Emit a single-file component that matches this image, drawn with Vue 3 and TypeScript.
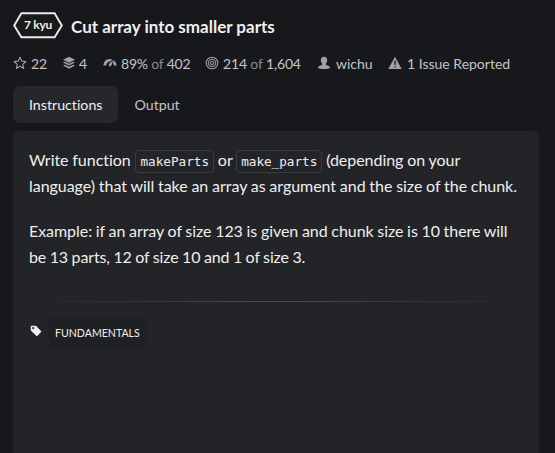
<script setup lang="ts">
import { ref } from 'vue'

type Tab = 'Instructions' | 'Output'
const tabs: Tab[] = ['Instructions', 'Output']
const active = ref<Tab>('Instructions')
</script>

<template>
  <main class="page">
    <header class="title-row">
      <div class="rank">
        <svg class="hex" width="50" height="27" viewBox="0 0 50 27">
          <path d="M8.4 1.2H41.6L48.8 13.5L41.6 25.2H8.4L1.2 13.5Z" fill="#1a1a1a" stroke="#ececec" stroke-width="1.9" />
        </svg>
        <span class="rank-text">7 kyu</span>
      </div>
      <h1>Cut array into smaller parts</h1>
    </header>

    <div class="stats">
      <div class="stat stars">
        <svg width="14" height="14" viewBox="0 0 14 14"><path d="M7 1.2L8.7 5.1L12.9 5.5L9.7 8.3L10.7 12.5L7 10.3L3.3 12.5L4.3 8.3L1.1 5.5L5.3 5.1Z" fill="none" stroke="#a0a1a2" stroke-width="1.1" stroke-linejoin="round" /></svg>
        <span>22</span>
      </div>
      <div class="stat collections">
        <svg width="14" height="14" viewBox="0 0 14 14" fill="#a0a1a2"><path d="M7 .7L13 3.7L7 6.7L1 3.7Z" /><path d="M1 6.6L2.8 5.7L7 7.8L11.2 5.7L13 6.6L7 9.6Z" /><path d="M1 9.6L2.8 8.7L7 10.8L11.2 8.7L13 9.6L7 12.7Z" /></svg>
        <span>4</span>
      </div>
      <div class="stat satisfaction">
        <svg width="14" height="14" viewBox="0 0 14 14"><path d="M.4 9.6C.8 5.7 3.2 3.3 6.4 3.1C7.5 3 8.4 3.2 9.2 3.6L7.4 5.6C5 5.5 3.5 7.2 3.2 9.6ZM11.2 4.6C12.6 5.8 13.4 7.4 13.6 9.6H10.9C10.8 8.6 10.4 7.7 9.9 7.1Z" fill="#a0a1a2" /><path d="M10.8 3.4L8.3 9.4C7.8 10.6 6.1 10.5 5.8 9.4C5.6 8.7 5.9 8.2 6.3 7.8Z" fill="#a0a1a2" /></svg>
        <span>89% <i>of</i> 402</span>
      </div>
      <div class="stat completed">
        <svg width="14" height="14" viewBox="0 0 14 14" fill="none" stroke="#a0a1a2"><circle cx="7" cy="7" r="5.8" stroke-width="1.1" /><circle cx="7" cy="7" r="3.8" stroke-width="1" /><circle cx="7" cy="7" r="1.8" stroke-width="1" /><circle cx="7" cy="7" r=".5" fill="#a0a1a2" stroke="none" /></svg>
        <span>214 <i>of</i> 1,604</span>
      </div>
      <div class="stat author">
        <svg width="14" height="14" viewBox="0 0 14 14"><path d="M7 .8C9 .8 10.2 2 10.2 4.2C10.2 5.7 9.5 7 8.7 7.8C8.7 8.7 9 9 9.8 9.2C12 9.7 13 10.4 13 12.1C11 13.4 3 13.4 1 12.1C1 10.4 2 9.7 4.2 9.2C5 9 5.3 8.7 5.3 7.8C4.5 7 3.8 5.7 3.8 4.2C3.8 2 5 .8 7 .8Z" fill="#a0a1a2" /></svg>
        <span>wichu</span>
      </div>
      <div class="stat issues">
        <svg width="14" height="14" viewBox="0 0 14 14"><path d="M7 .8L13.7 13H.3Z" fill="#a0a1a2" /><path d="M6.2 4.8H7.8L7.5 9.1H6.5ZM6.3 10.2H7.7V11.6H6.3Z" fill="#17181b" /></svg>
        <span>1 Issue Reported</span>
      </div>
    </div>

    <nav class="tabs">
      <button v-for="tab in tabs" :key="tab" :class="{ active: active === tab }" @click="active = tab">{{ tab }}</button>
    </nav>

    <section class="panel">
      <p>Write function <code class="first">makeParts</code> or <code>make_parts</code> (depending on your<br>language) that will take an array as argument and the size of the chunk.</p>
      <p class="example">Example: if an array of size 123 is given and chunk size is 10 there will<br><span class="result">be 13 parts, 12 of size 10 and 1 of size 3.</span></p>
      <div class="divider"></div>
      <div class="tags">
        <svg width="12" height="12" viewBox="0 0 12 12"><path fill-rule="evenodd" d="M.7 1.7Q.7.7 1.7.7H5.2L6.2 1.1L11 5.9Q11.6 6.5 11 7.1L7.5 10.7Q6.8 11.3 6.2 10.7L1.1 5.7L.7 4.8ZM3.2 2A1.1 1.1 0 1 0 3.2 4.2A1.1 1.1 0 1 0 3.2 2Z" fill="#efefef" /></svg>
        <span class="tag">FUNDAMENTALS</span>
      </div>
    </section>
  </main>
</template>

<style>
body { background: #17181b; overflow: hidden; }
</style>

<style scoped>
.page { box-sizing: border-box; height: 453px; padding: 12px 16px 0 13px; display: flex; flex-direction: column; background: #17181b; color: #efefef; font-family: Lato, sans-serif; overflow: hidden; }
.title-row { display: flex; height: 27px; flex: none; }
.rank { display: grid; width: 50px; height: 27px; place-items: center; }
.rank > * { grid-area: 1 / 1; }
.hex { display: block; }
.rank-text { font-size: 12px; font-weight: 700; line-height: 16px; padding-bottom: 1px; letter-spacing: -.3px; }
h1 { margin: 1px 0 0 8px; font-size: 17px; line-height: 27px; font-weight: 700; white-space: nowrap; }
.stats { display: flex; height: 20px; margin-top: 15px; flex: none; color: #c3c4c5; font-size: 14px; line-height: 20px; white-space: nowrap; }
.stat { display: flex; gap: 4px; flex: none; }
.stat svg { flex: none; margin-top: 2px; }
.stat i { font-style: normal; color: #898a8c; }
.satisfaction span { letter-spacing: -.2px; }
.completed span { letter-spacing: -.15px; }
.stars { width: 49px; }
.collections { width: 41px; gap: 3px; }
.satisfaction { width: 102px; }
.completed { width: 112px; }
.author { width: 71px; gap: 5px; }
.issues { gap: 5px; }
.tabs { display: flex; height: 37px; margin-top: 12px; flex: none; }
button { border: 0; border-radius: 7px; padding: 0 16px; background: transparent; color: #c3c4c5; font: 14.2px/37px Lato, sans-serif; font-variant-ligatures: none; }
button.active { background: #26272b; color: #efefef; }
.panel { box-sizing: border-box; flex: 1; margin-top: 8px; padding: 16px; border-radius: 7px 7px 0 0; background: #232427; }
p { margin: 0 0 19px; font-size: 16px; line-height: 26px; letter-spacing: -.04px; word-spacing: -.25px; white-space: nowrap; }
.example { letter-spacing: -.05px; word-spacing: -.35px; }
.result { letter-spacing: -.12px; word-spacing: -.45px; }
code { padding: 3px 4px; border: 1px solid #3b3c3f; border-radius: 4px; font-family: "DejaVu Sans Mono", monospace; font-size: 12.7px; line-height: 1; letter-spacing: -.02px; word-spacing: 0; }
.first { margin-left: 1px; }
.divider { height: 1px; margin-top: 31px; background: linear-gradient(90deg, transparent, #4b4c4e 50%, transparent); }
.tags { display: flex; margin-top: 16px; gap: 6px; }
.tags svg { margin: 7px 0 0 1px; }
.tag { height: 30px; padding: 0 7px; border-radius: 4px; background: #1f2023; font-size: 10.6px; line-height: 31px; }
</style>
